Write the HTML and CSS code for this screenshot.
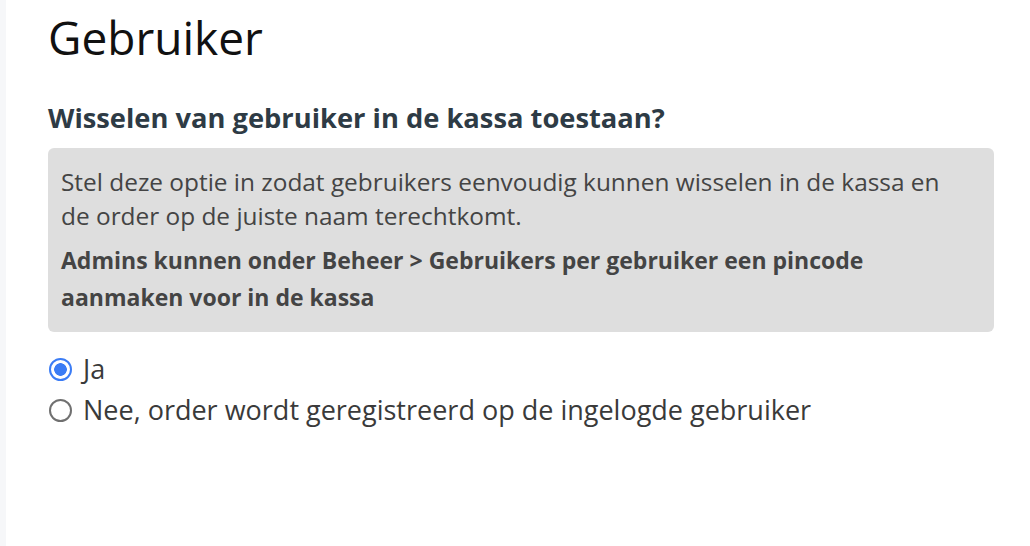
FILE: index.html
```html
<!DOCTYPE html>
<html lang="nl">
<head>
<meta charset="utf-8">
<title>Gebruiker</title>
<link rel="stylesheet" href="styles.css">
</head>
<body>
<div class="page">
  <aside class="strip"></aside>
  <main class="content">
    <h1 class="title">Gebruiker</h1>
    <h2 class="question">Wisselen van gebruiker in de kassa toestaan?</h2>
    <div class="info">
      <p class="info-text">Stel deze optie in zodat gebruikers eenvoudig kunnen wisselen in de kassa en de order op de juiste naam terechtkomt.</p>
      <p class="info-strong">Admins kunnen onder Beheer &gt; Gebruikers per gebruiker een pincode aanmaken voor in de kassa</p>
    </div>
    <div class="options">
      <label class="option"><span class="radio checked"></span><span class="label">Ja</span></label>
      <label class="option"><span class="radio"></span><span class="label">Nee, order wordt geregistreerd op de ingelogde gebruiker</span></label>
    </div>
  </main>
</div>
</body>
</html>
```
FILE: styles.css
```css
html, body {
  margin: 0;
  padding: 0;
  background: #ffffff;
}
body {
  font-family: "Open Sans", "Noto Sans", sans-serif;
}
.page {
  display: flex;
  height: 546px;
  overflow: hidden;
}
.strip {
  width: 6px;
  flex: none;
  background: #f6f7f9;
}
.content {
  flex: 1;
  padding: 0 36px 0 42px;
}
.title {
  margin: 11px 0 0;
  font-size: 46px;
  font-weight: 400;
  line-height: 52px;
  color: #111111;
}
.question {
  margin: 38px 0 0;
  font-size: 27.3px;
  font-weight: 700;
  line-height: 34px;
  color: #2e3b45;
}
.info {
  margin-top: 13px;
  background: #dedede;
  border-radius: 6px;
  padding: 17px 32px 16px 13px;
  color: #444444;
  font-size: 23px;
}
.info p {
  margin: 0;
}
.info .info-text {
  font-size: 24.4px;
  line-height: 34px;
}
.info .info-strong {
  font-weight: 700;
  line-height: 37px;
  margin-top: 9px;
}
.options {
  margin-top: 22px;
  display: flex;
  flex-direction: column;
  gap: 11px;
}
.option {
  display: flex;
  align-items: center;
  gap: 11px;
  font-size: 27px;
  color: #3a3a3a;
  line-height: 30px;
}
.radio {
  width: 23px;
  height: 23px;
  border: 2px solid #707070;
  border-radius: 50%;
  box-sizing: border-box;
  flex: none;
  background: #ffffff;
  margin-left: 1px;
}
.radio.checked {
  border: 2.5px solid #3b7cf5;
  background: radial-gradient(circle, #3b7cf5 0 6px, #ffffff 6.6px);
}
```
